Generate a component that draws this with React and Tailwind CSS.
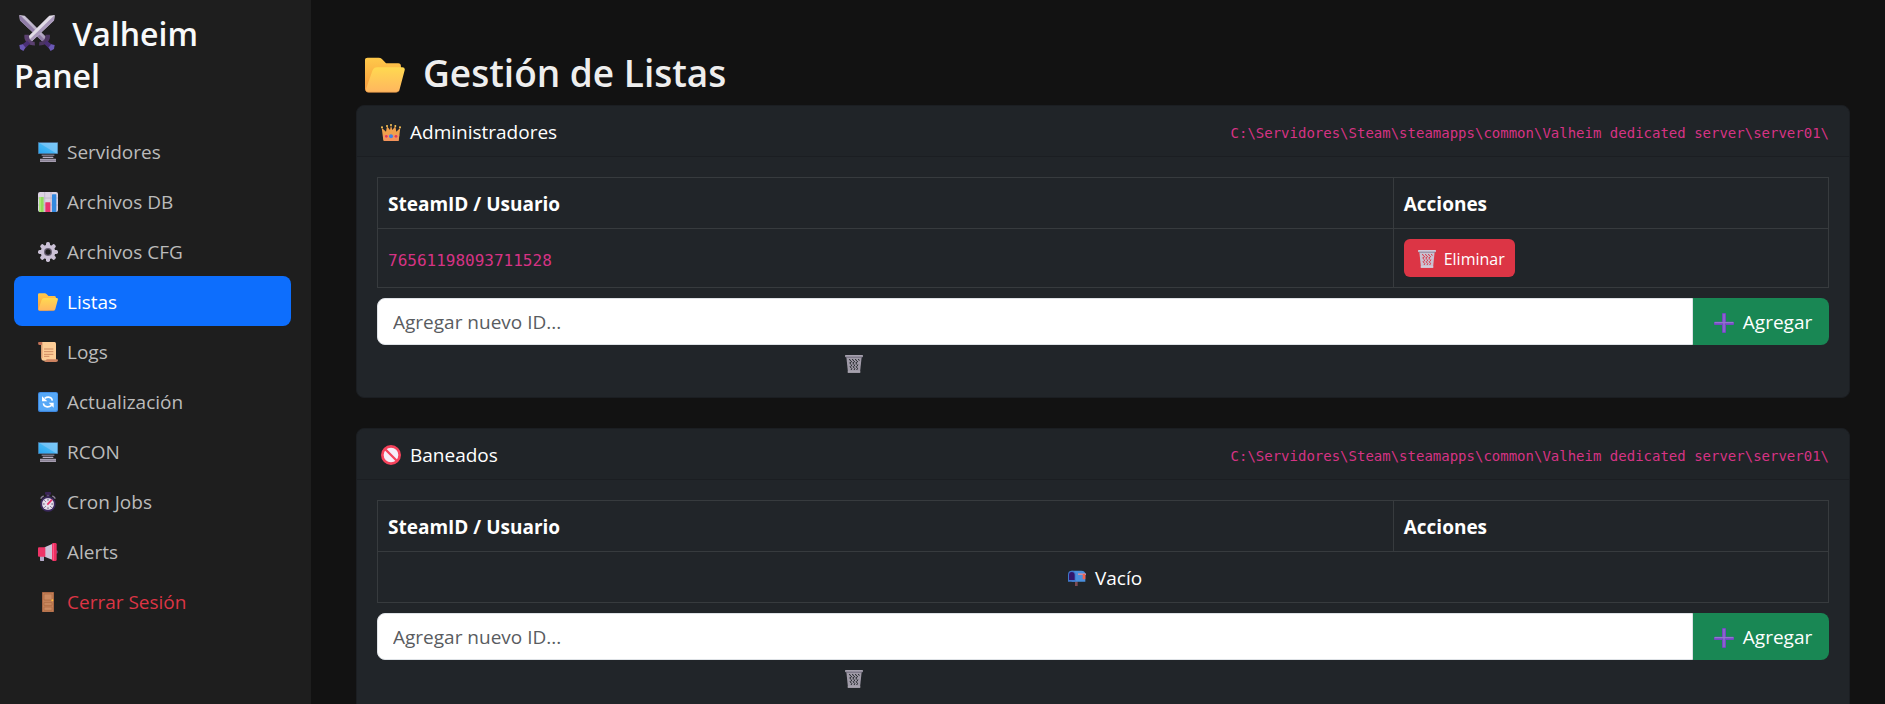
import React from "react";

function Swords({ className }) {
  return (
    <svg viewBox="0 0 104 106" className={className} aria-hidden="true">
      <defs>
        <linearGradient id="bladeL" x1="0" y1="0" x2="1" y2="1">
          <stop offset="0" stopColor="#cfc8da" />
          <stop offset="1" stopColor="#a79ab8" />
        </linearGradient>
      </defs>
      <path d="M0 0 L16 2 L84 70 L72 82 L2 16 Z" fill="url(#bladeL)" />
      <path d="M0 0 L6 4 L78 76 L72 82 L2 16 Z" fill="#8f7ca6" />
      <path d="M104 0 L88 2 L22 68 L34 80 L102 16 Z" fill="#e2dde8" />
      <path d="M104 0 L102 16 L34 80 L28 74 Z" fill="#a999bb" />
      <path d="M15 58 C12 74 24 90 46 90 L45 79 C34 78 28 72 28 58 Z" fill="#5b4070" />
      <path d="M90 58 C93 74 80 90 58 90 L59 79 C71 78 77 72 77 58 Z" fill="#4c3560" />
      <path d="M23 76 L32 84 L15 100 L5 90 Z" fill="#4a2f75" />
      <path d="M81 76 L72 84 L89 100 L99 90 Z" fill="#4a2f75" />
      <path d="M0 88 L10 86 L18 96 L12 106 L2 100 Z" fill="#6a58b5" />
      <path d="M104 88 L94 86 L86 96 L92 106 L102 100 Z" fill="#6a58b5" />
    </svg>
  );
}

function Folder({ className }) {
  return (
    <svg viewBox="0 0 118 104" className={className} aria-hidden="true">
      <defs>
        <linearGradient id="folderBack" x1="0" y1="0" x2="0" y2="1">
          <stop offset="0" stopColor="#ffc94a" />
          <stop offset="1" stopColor="#f79a3e" />
        </linearGradient>
        <linearGradient id="folderFront" x1="0" y1="0" x2="0" y2="1">
          <stop offset="0" stopColor="#ffd950" />
          <stop offset="1" stopColor="#ffb65f" />
        </linearGradient>
      </defs>
      <path d="M0 8 Q0 1 8 1 H40 Q46 1 50 5 L62 17 H98 Q106 17 106 26 V60 L60 102 H10 Q0 102 0 92 Z" fill="url(#folderBack)" />
      <path d="M36 29 H110 Q119 29 117 38 L102 95 Q100 103 91 103 H10 Q0 103 3 93 L22 39 Q26 29 36 29 Z" fill="url(#folderFront)" />
      <path d="M2 98 Q5 103 10 103 H91 Q97 103 100 98" fill="none" stroke="#d98f45" strokeWidth="2" />
    </svg>
  );
}

function Monitor({ className }) {
  return (
    <svg viewBox="0 0 60 60" className={className} aria-hidden="true">
      <defs>
        <linearGradient id="screen" x1="0" y1="1" x2="1" y2="0">
          <stop offset="0" stopColor="#2aa5f0" />
          <stop offset="1" stopColor="#5cc8fb" />
        </linearGradient>
      </defs>
      <rect x="0" y="0" width="60" height="36" fill="#47617f" />
      <rect x="2" y="3" width="56" height="31" fill="url(#screen)" />
      <path d="M4 3 H58 V34 H54 Z" fill="#8fc9f7" opacity=".6" />
      <path d="M11 38 H49 V41 Q44 42 43 48 H17 Q16 42 11 41 Z" fill="#4d4955" />
      <path d="M11 38 H49 V41 H11 Z" fill="#8d8796" />
      <path d="M14 45 H46 V48 H14 Z" fill="#b5adbe" />
      <rect x="6" y="50" width="48" height="10" rx="1" fill="#a49caf" />
      <rect x="6" y="54" width="48" height="2" fill="#7e7789" />
    </svg>
  );
}

function Chart({ className }) {
  return (
    <svg viewBox="0 0 60 60" className={className} aria-hidden="true">
      <rect width="60" height="60" rx="6" fill="#dcd3e3" />
      <path d="M0 18 H60 M0 39 H60 M20 0 V60 M39 0 V60" stroke="#b9aec4" strokeWidth="2" />
      <rect x="4" y="15" width="13" height="45" rx="1" fill="#8fdb5b" />
      <rect x="22" y="31" width="15" height="29" rx="1" fill="#e8336f" />
      <rect x="42" y="7" width="13" height="53" rx="1" fill="#3389e0" />
      <rect x="4" y="15" width="5" height="45" fill="#a7ea73" />
    </svg>
  );
}

function Gear({ className }) {
  const teeth = [0, 45, 90, 135, 180, 225, 270, 315];
  return (
    <svg viewBox="0 0 60 60" className={className} aria-hidden="true">
      <g fill="#cbc1d6">
        {teeth.map((a) => (
          <rect key={a} x="24" y="0" width="12" height="16" rx="5" transform={`rotate(${a} 30 30)`} />
        ))}
        <circle cx="30" cy="30" r="22" />
      </g>
      <circle cx="30" cy="30" r="12" fill="#685f73" />
      <circle cx="30" cy="30" r="8" fill="#1e1e1e" />
    </svg>
  );
}

function Scroll({ className }) {
  return (
    <svg viewBox="0 0 60 60" className={className} aria-hidden="true">
      <path d="M6 0 H50 Q54 0 54 5 V56 H18 Q10 56 10 48 V8 Z" fill="#fdcd96" />
      <path d="M0 2 Q0 0 4 0 H13 V9 H4 Q0 9 0 2 Z" fill="#c07055" />
      <path d="M10 8 H14 V48 H10 Z" fill="#e5a577" />
      <path d="M18 21 H46 M18 29 H46 M18 37 H46 M18 43 H34" stroke="#cf8a62" strokeWidth="3" />
      <path d="M26 52 H57 Q60 52 60 55 Q60 60 54 60 H17 Q24 59 26 52 Z" fill="#cd8260" />
    </svg>
  );
}

function Refresh({ className }) {
  return (
    <svg viewBox="0 0 60 60" className={className} aria-hidden="true">
      <rect width="60" height="60" rx="6" fill="#3d86dd" />
      <rect x="3" y="2" width="55" height="54" rx="5" fill="#56a8f7" />
      <path d="M20 19 Q29 13 38 17 Q42 20 43 26" fill="none" stroke="#fff" strokeWidth="5" />
      <path d="M41 40 Q31 47 22 43 Q17 40 16 34" fill="none" stroke="#fff" strokeWidth="5" />
      <path d="M12 13 V28 H28 Z" fill="#fff" />
      <path d="M47 47 V32 H32 Z" fill="#fff" />
    </svg>
  );
}

function Stopwatch({ className }) {
  return (
    <svg viewBox="0 0 60 60" className={className} aria-hidden="true">
      <rect x="21" y="0" width="18" height="8" rx="2" fill="#3b2458" />
      <rect x="26" y="8" width="8" height="6" fill="#5d4778" />
      <path d="M8 20 Q11 14 17 12 M43 12 Q49 14 52 20" fill="none" stroke="#8c819b" strokeWidth="4" />
      <circle cx="30" cy="36" r="23" fill="#3a285c" />
      <circle cx="30" cy="36" r="18" fill="#e4deea" />
      <path d="M30 20 V26 M30 46 V52 M14 36 H20 M40 36 H46 M19 25 L23 29 M19 47 L23 43 M41 47 L37 43" stroke="#66587c" strokeWidth="3" />
      <path d="M28 38 L42 23" stroke="#e7336a" strokeWidth="5" />
    </svg>
  );
}

function Megaphone({ className }) {
  return (
    <svg viewBox="0 0 60 60" className={className} aria-hidden="true">
      <path d="M6 36 H18 V56 Q18 57 16 57 H8 Q6 57 6 55 Z" fill="#b5aac9" />
      <path d="M54 24 Q60 25 60 30 Q60 35 54 36 Z" fill="#5d4e78" />
      <path d="M20 16 L44 5 V54 L20 44 Z" fill="#cdc4d9" />
      <path d="M0 19 Q0 16 3 16 H22 V44 H3 Q0 44 0 41 Z" fill="#ee3467" />
      <rect x="42" y="3" width="14" height="54" rx="4" fill="#ee2f62" />
      <path d="M46 5 V55" stroke="#ff6090" strokeWidth="3" />
    </svg>
  );
}

function Door({ className }) {
  return (
    <svg viewBox="0 0 60 60" className={className} aria-hidden="true">
      <rect x="12" y="0" width="36" height="60" rx="1" fill="#9a5b3d" />
      <rect x="14" y="2" width="32" height="57" fill="#c58158" />
      <path d="M18 6 H42 V24 H18 Z M18 32 H42 V40 H18 Z M18 45 H42 V55 H18 Z" fill="#cd8b62" stroke="#a9683f" strokeWidth="2" />
      <circle cx="43" cy="25" r="3" fill="#ffc23d" />
    </svg>
  );
}

function Crown({ className }) {
  return (
    <svg viewBox="0 -6 60 60" className={className} aria-hidden="true">
      <path d="M2 11 L15 23 L18 7 L27 18 L30 4 L34 18 L43 7 L46 23 L58 11 L53 50 Q53 51 50 51 H10 Q7 51 7 49 Z" fill="#f0a04c" />
      <path d="M6 32 H55 L52 51 H9 Z" fill="#f3935b" />
      <g fill="#ffc857">
        <circle cx="3" cy="10" r="3" />
        <circle cx="18" cy="6" r="3" />
        <circle cx="30" cy="3" r="3" />
        <circle cx="43" cy="6" r="3" />
        <circle cx="57" cy="10" r="3" />
      </g>
      <circle cx="30" cy="37" r="6" fill="#3f83e4" />
      <circle cx="16" cy="37" r="4" fill="#e2375f" />
      <circle cx="45" cy="37" r="4" fill="#e2375f" />
    </svg>
  );
}

function Prohibited({ className }) {
  return (
    <svg viewBox="0 0 60 60" className={className} aria-hidden="true">
      <circle cx="30" cy="30" r="26" fill="#f5eef8" stroke="#f5435c" strokeWidth="8" />
      <path d="M12 12 L48 48" stroke="#f5435c" strokeWidth="7" />
    </svg>
  );
}

function Trash({ className }) {
  return (
    <svg viewBox="0 0 54 54" className={className} aria-hidden="true">
      <path d="M4 5 H50 L45 53 H9 Z" fill="#c9c1d1" />
      <path
        d="M13 12 l4 6 M22 12 l4 6 M31 12 l4 6 M40 12 l3 5 M14 23 l4 6 M23 23 l4 6 M32 23 l4 6 M15 34 l4 6 M24 34 l4 6 M33 34 l4 6 M20 18 l-4 6 M29 18 l-4 6 M38 18 l-4 6 M21 29 l-4 6 M30 29 l-4 6 M39 29 l-4 6 M21 40 l-3 5 M30 40 l-3 5 M38 40 l-3 5"
        stroke="currentColor"
        strokeWidth="3"
      />
      <rect x="0" y="0" width="54" height="6" rx="2" fill="#d3cbdb" />
      <rect x="2" y="5" width="50" height="3" fill="#8a8195" />
      <rect x="8" y="49" width="38" height="4" fill="#d8d1df" />
    </svg>
  );
}

function Plus({ className }) {
  return (
    <svg viewBox="0 0 60 60" className={className} aria-hidden="true">
      <rect x="0" y="26" width="60" height="10" rx="3" fill="#7448c4" />
      <rect x="24" y="0" width="12" height="60" rx="3" fill="#7448c4" />
      <path d="M30 3 V57 M2 29 H58" stroke="#9474cf" strokeWidth="4" />
    </svg>
  );
}

function Mailbox({ className }) {
  return (
    <svg viewBox="0 0 54 48" className={className} aria-hidden="true">
      <rect x="21" y="34" width="8" height="14" fill="#7d4a52" />
      <path d="M11 2 H40 Q52 2 52 13 V35 H11 Z" fill="#4a8fdc" />
      <path d="M0 14 Q0 2 11 2 Q23 2 23 14 V35 H0 Z" fill="#3f78cc" />
      <path d="M3 15 Q3 6 11 6 Q20 6 20 15 V30 H3 Z" fill="#33166b" />
      <path d="M30 10 H54 V15 H30 Z" fill="#c98fa8" />
      <rect x="44" y="12" width="8" height="16" rx="2" fill="#f2624d" />
    </svg>
  );
}

const links = [
  { label: "Servidores", icon: Monitor },
  { label: "Archivos DB", icon: Chart },
  { label: "Archivos CFG", icon: Gear },
  { label: "Listas", icon: Folder, active: true },
  { label: "Logs", icon: Scroll },
  { label: "Actualización", icon: Refresh },
  { label: "RCON", icon: Monitor },
  { label: "Cron Jobs", icon: Stopwatch },
  { label: "Alerts", icon: Megaphone },
  { label: "Cerrar Sesión", icon: Door, danger: true },
];

function linkColor(link) {
  if (link.active) return "bg-[#0d6efd] text-white";
  if (link.danger) return "text-[#dc3545]";
  return "text-[#bbbbbb]";
}

function Sidebar() {
  return (
    <aside className="w-[311px] shrink-0 bg-[#1e1e1e] pt-[13px] pr-5 pl-[14px]">
      <h1 className="text-[32px] leading-[42px] font-semibold text-[#f8f9fa]">
        <Swords className="mr-[9px] ml-[5px] inline-block h-9 w-9 align-[-5px]" />
        {" Valheim Panel"}
      </h1>
      <nav className="mt-[29px] flex flex-col">
        {links.map((link) => (
          <a
            key={link.label}
            href="#"
            className={`flex h-[50px] items-center gap-[9px] rounded-lg pt-0.5 pl-6 text-[19px] ${linkColor(link)}`}
          >
            <link.icon className="h-5 w-5" />
            {link.label}
          </a>
        ))}
      </nav>
    </aside>
  );
}

const cell = "border border-[#373b3e] px-[10px]";

function ListCard({ id, title, icon: Icon, ids }) {
  return (
    <section className="rounded-lg border border-[#1b1e22] bg-[#212529]">
      <header className="flex h-[51px] items-center justify-between rounded-t-lg border-b border-[#1b1e22] bg-[#202428] pt-0.5 pr-5 pl-6">
        <h2 className="flex items-center gap-[9px] text-[19px] text-white">
          <Icon className="h-5 w-5" />
          {title}
        </h2>
        <code className="pt-0.5 font-['DejaVu_Sans_Mono',monospace] text-sm text-[#d63384]">
          C:\Servidores\Steam\steamapps\common\Valheim dedicated server\server01\
        </code>
      </header>
      <div className="p-5">
        <table className="w-full table-fixed border-collapse text-left text-[19px] text-white">
          <thead>
            <tr className="h-[51px]">
              <th className={`${cell} w-[70%] pt-0.5 font-bold`}>SteamID / Usuario</th>
              <th className={`${cell} pt-0.5 font-bold`}>Acciones</th>
            </tr>
          </thead>
          <tbody>
            {ids.map((value) => (
              <tr key={value} className="h-[59px]">
                <td className={`${cell} pt-0.5`}>
                  <code className="font-['DejaVu_Sans_Mono',monospace] text-base text-[#d63384]">{value}</code>
                </td>
                <td className={cell}>
                  <button
                    type="button"
                    className="flex h-[38px] items-center gap-2 rounded-md bg-[#dc3545] pt-0.5 pr-[10px] pl-[14px] text-[16px] text-white"
                  >
                    <Trash className="h-[18px] w-[18px] text-[#dc3545]" />
                    Eliminar
                  </button>
                </td>
              </tr>
            ))}
            {ids.length === 0 && (
              <tr className="h-[51px]">
                <td colSpan={2} className={`${cell} pt-0.5`}>
                  <span className="flex items-center justify-center gap-[9px] pl-1">
                    <Mailbox className="h-4 w-[18px]" />
                    Vacío
                  </span>
                </td>
              </tr>
            )}
          </tbody>
        </table>
        <form className="mt-[10px] flex h-[47px]" onSubmit={(e) => e.preventDefault()}>
          <input
            id={id}
            type="text"
            aria-label={title}
            placeholder="Agregar nuevo ID..."
            className="min-w-0 flex-1 rounded-l-lg border border-[#dee2e6] bg-white px-[15px] pt-0.5 text-[19px] text-[#212529] placeholder:text-[#595c5f]"
          />
          <button
            type="submit"
            className="flex w-[136px] items-center justify-center gap-[9px] rounded-r-lg bg-[#198754] pt-0.5 pl-1 text-[19px] text-white"
          >
            <Plus className="h-5 w-5" />
            Agregar
          </button>
        </form>
        <div className="mt-[5px] flex h-[27px] justify-center">
          <div className="flex w-[516px] items-center">
            <Trash className="h-[18px] w-[18px] text-[#212529] opacity-75" />
          </div>
        </div>
      </div>
    </section>
  );
}

export default function App() {
  return (
    <div className="flex min-h-screen bg-[#121212] font-['Open_Sans','Noto_Sans',sans-serif]">
      <Sidebar />
      <main className="min-w-0 flex-1 pt-[49px] pr-[35px] pl-[45px]">
        <h1 className="mb-2 flex h-12 items-center pl-[9px] text-[37px] font-semibold text-[#eeeeee]">
          <Folder className="mt-1 mr-[18px] h-9 w-10" />
          Gestión de Listas
        </h1>
        <div className="flex flex-col gap-[30px] pb-8">
          <ListCard id="admins" title="Administradores" icon={Crown} ids={["76561198093711528"]} />
          <ListCard id="banned" title="Baneados" icon={Prohibited} ids={[]} />
        </div>
      </main>
    </div>
  );
}
